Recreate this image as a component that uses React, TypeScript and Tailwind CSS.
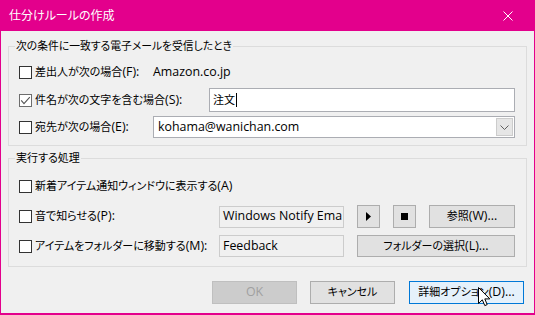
import React from "react";

const font = "font-['Open_Sans','Noto_Sans_CJK_JP',sans-serif] [font-feature-settings:'palt']";

function L({ children }: { children: React.ReactNode }) {
  return <span className="text-[12.4px]">{children}</span>;
}

function Box({ checked }: { checked?: boolean }) {
  return (
    <span
      className={`w-[13px] h-[13px] shrink-0 bg-white border flex items-center justify-center ${
        checked ? "border-[#6d6d6d]" : "border-[#333333]"
      }`}
    >
      {checked && (
        <svg width="11" height="11" viewBox="0 0 11 11">
          <path d="M1.2 5.3L4 8.6L9.8 2.2" fill="none" stroke="#555" strokeWidth="1.1" />
        </svg>
      )}
    </span>
  );
}

function Btn({
  children,
  className = "",
}: {
  children?: React.ReactNode;
  className?: string;
}) {
  return (
    <div
      className={`shrink-0 flex items-center justify-center bg-[#E1E1E1] border border-[#ADADAD] text-[11px] ${className}`}
    >
      {children}
    </div>
  );
}

export default function App() {
  return (
    <div
      className={`relative w-[535px] h-[315px] bg-[#E3008C] flex flex-col px-[1px] pb-[2px] text-black ${font}`}
    >
      {/* title bar */}
      <div className="h-[31px] shrink-0 flex items-center pl-[8px] pr-[21px] text-white text-[12px]">
        <span className="leading-none">仕分けルールの作成</span>
        <svg className="ml-auto" width="10" height="10" viewBox="0 0 10 10">
          <path d="M0.5 0.5L9.5 9.5M9.5 0.5L0.5 9.5" stroke="white" strokeWidth="1" />
        </svg>
      </div>

      {/* body */}
      <div className="flex-1 bg-[#F0F0F0] flex flex-col px-[7px] pt-[15px] text-[11px]">
        {/* group 1 */}
        <div className="relative h-[100px] shrink-0 border border-[#DCDCDC] pt-[13px] pl-[10px] pr-[11px] flex flex-col gap-[4px]">
          <span className="absolute left-[6px] -top-[8px] px-[1px] bg-[#F0F0F0] leading-[14px] text-[10.8px]">
            次の条件に一致する電子メールを受信したとき
          </span>
          <div className="h-[24px] flex items-center">
            <Box />
            <span className="ml-[3px] w-[118px] shrink-0">
              差出人が次の場合<L>(F):</L>
            </span>
            <L>Amazon.co.jp</L>
          </div>
          <div className="h-[24px] flex items-center">
            <Box checked />
            <span className="ml-[3px]">
              件名が次の文字を含む場合<L>(S):</L>
            </span>
            <div className="ml-auto w-[306px] h-[24px] bg-white border border-[#ABADB3] flex items-center pl-[3px] text-[11px]">
              <span>注文</span>
              <span className="w-[1px] h-[14px] bg-black ml-[1px]" />
            </div>
          </div>
          <div className="h-[22px] flex items-center">
            <Box />
            <span className="ml-[3px]">
              宛先が次の場合<L>(E):</L>
            </span>
            <div className="ml-auto w-[362px] h-[22px] bg-white border border-[#ABADB3] flex items-center pl-[4px] pr-[1px]">
              <L>kohama@wanichan.com</L>
              <div className="ml-auto w-[17px] h-[18px] bg-[#E6E6E6] border border-[#CCCCCC] flex items-center justify-center">
                <svg width="9" height="5" viewBox="0 0 9 5">
                  <path d="M0.5 0.5L4.5 4.5L8.5 0.5" fill="none" stroke="#606060" strokeWidth="1" />
                </svg>
              </div>
            </div>
          </div>
        </div>

        {/* group 2 */}
        <div className="relative mt-[12px] h-[109px] shrink-0 border border-[#DCDCDC] pt-[16px] pl-[10px] pr-[11px] flex flex-col">
          <span className="absolute left-[6px] -top-[8px] px-[1px] bg-[#F0F0F0] leading-[14px] text-[11px]">
            実行する処理
          </span>
          <div className="h-[22px] flex items-center">
            <Box />
            <span className="ml-[3px]">
              新着アイテム通知ウィンドウに表示する<L>(A)</L>
            </span>
          </div>
          <div className="mt-[8px] h-[23px] flex items-center">
            <Box />
            <span className="ml-[3px]">
              音で知らせる<L>(P):</L>
            </span>
            <div className="ml-auto flex items-center gap-[13px]">
              <div className="w-[125px] h-[22px] border border-[#CCCCCC] bg-[#F0F0F0] flex items-center pl-[3px] whitespace-nowrap">
                <L>Windows Notify Ema</L>
              </div>
              <Btn className="w-[23px] h-[23px]">
                <svg width="5" height="9" viewBox="0 0 5 9">
                  <path d="M0 0L5 4.5L0 9Z" fill="black" />
                </svg>
              </Btn>
              <Btn className="w-[23px] h-[23px]">
                <span className="w-[7px] h-[7px] bg-black" />
              </Btn>
              <Btn className="w-[86px] h-[23px]">
                参照<L>(W)...</L>
              </Btn>
            </div>
          </div>
          <div className="mt-[7px] h-[22px] flex items-center">
            <Box />
            <span className="ml-[3px]">
              アイテムをフォルダーに移動する<L>(M):</L>
            </span>
            <div className="ml-auto flex items-center gap-[13px]">
              <div className="w-[125px] h-[22px] border border-[#CCCCCC] bg-[#F0F0F0] flex items-center pl-[3px]">
                <L>Feedback</L>
              </div>
              <Btn className="w-[158px] h-[22px]">
                フォルダーの選択<L>(L)...</L>
              </Btn>
            </div>
          </div>
        </div>

        {/* buttons */}
        <div className="mt-[14px] mr-[3px] flex justify-end items-center">
          <div className="w-[85px] h-[23px] flex items-center justify-center bg-[#CCCCCC] border border-[#BFBFBF] text-[#A0A0A0] text-[12.4px]">
            OK
          </div>
          <Btn className="ml-[13px] w-[85px] h-[23px]">キャンセル</Btn>
          <div className="ml-[14px] w-[115px] h-[23px] flex items-center justify-center bg-[#E5F1FB] border border-[#0078D7] text-[11px]">
            詳細オプション<L>(D)...</L>
          </div>
        </div>
      </div>

      {/* mouse cursor */}
      <svg className="absolute left-[478px] top-[287px]" width="13" height="20" viewBox="0 0 13 20">
        <path
          d="M0.5 0.5L0.5 16.5L4.3 12.8L6.8 18.6L9.2 17.6L6.8 11.9L11.8 11.9Z"
          fill="white"
          stroke="black"
          strokeWidth="1"
          strokeLinejoin="miter"
        />
      </svg>
    </div>
  );
}
